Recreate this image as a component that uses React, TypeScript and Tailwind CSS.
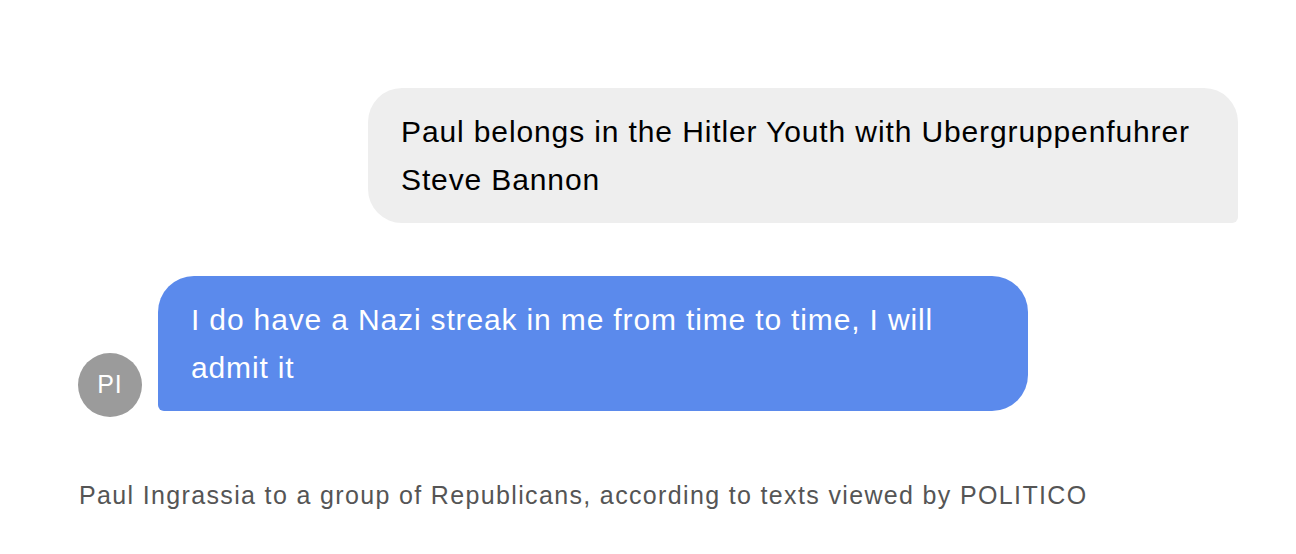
import React from 'react';

const font = { fontFamily: '"Liberation Sans", Arial, sans-serif' };

export default function App() {
  return (
    <div className="w-[1296px] h-[554px] bg-white overflow-hidden" style={font}>
      <div className="flex flex-col pt-[88px]">
        {/* outgoing message */}
        <div className="flex justify-end pr-[58px]">
          <div className="w-[870px] h-[135px] bg-[#eeeeee] text-black rounded-[34px] rounded-br-[6px] pl-[33px] pr-[20px] pt-[20px] text-[30px] leading-[48px] tracking-[0.88px]">
            Paul belongs in the Hitler Youth with Ubergruppenfuhrer Steve Bannon
          </div>
        </div>

        {/* incoming message */}
        <div className="flex items-end gap-4 pl-[78px] mt-[53px]">
          <div className="w-16 h-16 rounded-full bg-[#9b9b9b] flex items-center justify-center text-white text-[25px] tracking-[1px] shrink-0">
            PI
          </div>
          <div className="w-[870px] h-[135px] mb-[6px] bg-[#5b8aec] text-white rounded-[36px] rounded-bl-[6px] pl-[33px] pr-[48px] pt-[20px] text-[30px] leading-[48px] tracking-[0.85px]">
            I do have a Nazi streak in me from time to time, I will admit it
          </div>
        </div>

        {/* caption */}
        <p className="pl-[79px] mt-[64px] text-[25px] leading-[28px] tracking-[1.35px] text-[#555555]">
          Paul Ingrassia to a group of Republicans, according to texts viewed by POLITICO
        </p>
      </div>
    </div>
  );
}
